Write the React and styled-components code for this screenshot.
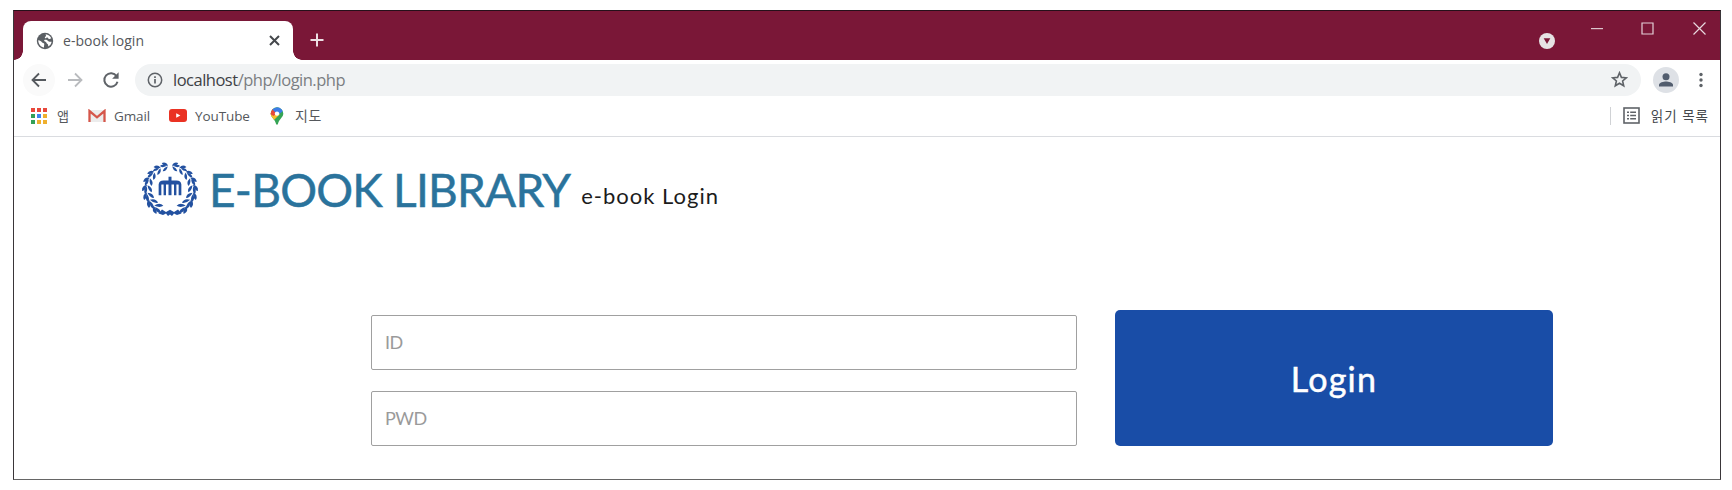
import React from "react";
import styled, { createGlobalStyle } from "styled-components";

const GlobalStyle = createGlobalStyle`
  * { box-sizing: border-box; }
  body { margin: 0; background: #fff; overflow: hidden; }
  svg { display: block; flex: none; }
`;

const uiFont = `"Open Sans", "Noto Sans CJK KR", sans-serif`;
const brandFont = `Lato, "Noto Sans CJK KR", sans-serif`;

const Page = styled.div`
  width: 1732px;
  height: 490px;
  padding: 10px 0 0 13px;
  background: #fff;
`;

const Window = styled.div`
  width: 1708px;
  height: 470px;
  border: 1px solid #3a3639;
  border-top-color: #26101a;
  border-bottom-color: #666;
  background: #fff;
  display: flex;
  flex-direction: column;
  font-family: ${uiFont};
`;

const TitleBar = styled.div`
  height: 49px;
  background: #7a1737;
  display: flex;
  align-items: flex-start;
  padding-left: 9px;
`;

const Tab = styled.div`
  position: relative;
  width: 270px;
  height: 39px;
  margin-top: 10px;
  padding: 0 13px 0 13px;
  border-radius: 8px 8px 0 0;
  background: #fff;
  display: flex;
  align-items: center;
  &::before, &::after {
    content: "";
    position: absolute;
    bottom: 0;
    width: 9px;
    height: 9px;
  }
  &::before { left: -9px; background: radial-gradient(circle at 0 0, transparent 8.5px, #fff 9px); }
  &::after { right: -9px; background: radial-gradient(circle at 100% 0, transparent 8.5px, #fff 9px); }
`;

const Label = styled.span`
  flex: none;
  white-space: pre;
  font-size: ${(p) => p.$size || 13.5}px;
  letter-spacing: ${(p) => p.$track || 0}px;
  color: ${(p) => p.$color || "#55585c"};
  line-height: 20px;
`;

const TabLabel = styled(Label)`
  flex: 1;
  margin-left: 9px;
`;

const NewTab = styled.div`
  margin: 22px 0 0 17px;
`;

const WindowControls = styled.div`
  margin-left: auto;
  display: flex;
  align-items: flex-start;
`;

const Control = styled.div`
  margin-top: ${(p) => p.$top}px;
  margin-right: ${(p) => p.$gap}px;
`;

const Toolbar = styled.div`
  height: 39px;
  padding: 0 17px 0 9px;
  display: flex;
  align-items: center;
`;

const NavButton = styled.div`
  width: 32px;
  height: 32px;
  margin-right: 4px;
  border-radius: 50%;
  background: ${(p) => (p.$raised ? "#fafafa" : "transparent")};
  display: flex;
  align-items: center;
  justify-content: center;
`;

const AddressBar = styled.div`
  flex: 1;
  height: 32px;
  margin-left: 4px;
  padding: 0 13px 0 12px;
  border-radius: 16px;
  background: #f1f3f4;
  display: flex;
  align-items: center;
`;

const Address = styled(Label)`
  flex: 1;
  margin-left: 10px;
  b { font-weight: 400; color: #3e4145; }
`;

const Avatar = styled.div`
  width: 26px;
  height: 26px;
  margin: 0 20px 0 12px;
  border-radius: 50%;
  background: #dee1e6;
  display: flex;
  align-items: center;
  justify-content: center;
`;

const Bookmarks = styled.div`
  height: 38px;
  padding: 0 11px 4px 17px;
  border-bottom: 1px solid #dadce0;
  display: flex;
  align-items: center;
`;

const Bookmark = styled.div`
  width: ${(p) => p.$width}px;
  display: flex;
  align-items: center;
  gap: ${(p) => p.$gap}px;
`;

const ReadingList = styled.div`
  height: 18px;
  margin-left: auto;
  padding-left: 12px;
  border-left: 1px solid #d0d2d5;
  display: flex;
  align-items: center;
  gap: 11px;
`;

const Header = styled.header`
  display: flex;
  align-items: flex-start;
  height: 80px;
  margin: 18px 0 0 127px;
  font-family: ${brandFont};
`;

const Crest = styled.div`
  margin-top: 7px;
`;

const Brand = styled.h1`
  margin: 0 0 0 10px;
  font-size: 46px;
  font-weight: 400;
  line-height: 70px;
  letter-spacing: -0.75px;
  color: #2a739c;
  -webkit-text-stroke: 0.5px #2a739c;
  white-space: nowrap;
`;

const Subtitle = styled.h2`
  margin: 6px 0 0 11px;
  font-size: 22px;
  font-weight: 400;
  line-height: 70px;
  letter-spacing: 1px;
  color: #1c1c1c;
  white-space: nowrap;
`;

const LoginForm = styled.form`
  display: grid;
  grid-template-columns: 706px 438px;
  column-gap: 38px;
  margin: 75px 0 0 357px;
  font-family: ${brandFont};
`;

const Fields = styled.div`
  display: flex;
  flex-direction: column;
  gap: 21px;
  padding-top: 5px;
`;

const Field = styled.input`
  width: 100%;
  height: 55px;
  padding: 0 13px 2px;
  border: 1px solid #a0a0a0;
  border-radius: 2px;
  outline: none;
  background: #fff;
  font: 400 18px ${brandFont};
  letter-spacing: -0.5px;
  &::placeholder { color: #9a9a9a; opacity: 1; }
`;

const Submit = styled.button`
  height: 136px;
  padding: 0;
  border: 0;
  border-radius: 5px;
  background: #194da7;
  color: #fff;
  font: 400 34px ${brandFont};
  letter-spacing: 1.3px;
  -webkit-text-stroke: 0.5px #fff;
`;

const GlobeIcon = () => (
  <svg width="18" height="18" viewBox="0 0 18 18">
    <circle cx="9" cy="9" r="8.2" fill="#5b5f64" />
    <path d="M9.6 2.2c2.600.2 4.700 1.700 5.700 4-.9.300-1.600 1.200-2.500.8-.8-.4-.4-1.300-1.500-1.500-1-.2-1 .9-2 .7-.8-.2-.4-1.300.3-1.600.8-.4.300-1.100 0-2.400z" fill="#fff" />
    <path d="M2.200 8.300c2 .2 3 .9 3.700 1.900.8 1 1.900.6 2.300 1.500.3.800-.3 1.500-.2 3.900-3-.5-5.600-3.100-5.800-7.300zM8.300 8c1.400-.6 2.900 0 3.800 1 .7.800 2.200.7 3.500.8-.2 1.800-1.300 3.700-3.300 4.800-.3-1.200.2-2.100-.8-2.700-1.200-.7-.7-1.600-1.700-2C9 9.500 7.700 9 8.300 8z" fill="#fff" />
  </svg>
);

const Arrow = ({ color, flip }) => (
  <svg width="16" height="16" viewBox="0 0 16 16" fill="none" stroke={color} strokeWidth="1.800">
    <path d={flip ? "M1 8h13M8 1.500 14.500 8 8 14.500" : "M15 8H2M8 1.500 1.500 8 8 14.500"} />
  </svg>
);

const ReloadIcon = () => (
  <svg width="18" height="18" viewBox="0 0 18 18">
    <path d="M14.600 5.200A6.700 6.700 0 1 0 15.500 10.700" fill="none" stroke="#5f6368" strokeWidth="2" />
    <path d="M16.600 1.300v6.500h-6.500z" fill="#5f6368" />
  </svg>
);

const InfoIcon = () => (
  <svg width="16" height="16" viewBox="0 0 16 16" fill="none" stroke="#5f6368">
    <circle cx="8" cy="8" r="6.700" strokeWidth="1.500" />
    <path d="M8 7v4.500M8 4.200v1.700" strokeWidth="1.700" />
  </svg>
);

const StarIcon = () => (
  <svg width="17" height="17" viewBox="0 0 17 17" fill="none" stroke="#5f6368" strokeWidth="1.600">
    <path d="m8.500 1.800 1.900 4.600 4.900.4-3.700 3.200 1.100 4.800-4.200-2.600-4.200 2.600 1.100-4.800-3.700-3.200 4.900-.4z" />
  </svg>
);

const PersonIcon = () => (
  <svg width="16" height="16" viewBox="0 0 16 16" fill="#525d6e">
    <circle cx="8" cy="4.700" r="3.500" />
    <path d="M1 14.500v-1.700c0-2.300 4.700-3.400 7-3.400s7 1.100 7 3.400v1.700z" />
  </svg>
);

const DotsIcon = () => (
  <svg width="4" height="16" viewBox="0 0 4 16" fill="#5f6368">
    {[2.500, 8, 13.500].map((y) => <circle key={y} cx="2" cy={y} r="1.700" />)}
  </svg>
);

const APP_COLORS = ["#e8483b", "#e8483b", "#e8483b", "#33a057", "#3d85f0", "#efb02e", "#33a057", "#efb02e", "#efb02e"];
const AppsIcon = () => (
  <svg width="16" height="16" viewBox="0 0 16 16">
    {APP_COLORS.map((c, i) => (
      <rect key={i} x={(i % 3) * 6} y={Math.floor(i / 3) * 6} width="4" height="4" fill={c} />
    ))}
  </svg>
);

const GmailIcon = () => (
  <svg width="18" height="14" viewBox="0 0 18 14">
    <rect x="1" y="1" width="16" height="12" fill="#ececec" />
    <path d="M1.500 13V2L9 8.300 16.500 2v11" fill="none" stroke="#d5564a" strokeWidth="2.300" />
  </svg>
);

const YouTubeIcon = () => (
  <svg width="18" height="13" viewBox="0 0 18 13">
    <rect width="18" height="13" rx="3" fill="#ea3223" />
    <path d="M7.200 4.200v4.600l4.200-2.300z" fill="#fff" />
  </svg>
);

const MapPinIcon = () => (
  <svg width="14" height="18" viewBox="0 0 14 18">
    <clipPath id="pin"><path d="M7 .3a6.300 6.300 0 0 1 6.300 6.300c0 4-4.500 5.700-5.500 11h-1.600C5.200 12.300.7 10.600.7 6.600A6.300 6.300 0 0 1 7 .3z" /></clipPath>
    <g clipPath="url(#pin)">
      <path d="M0 0h14v18H0z" fill="#35a455" />
      <path d="M0 5 5 5 10 7 3 14 0 11z" fill="#f7bd2b" />
      <path d="M0 2 3 2 7 6 3.500 9 0 7z" fill="#e6493a" />
      <path d="M2 2 7 0h7v3.500L9 7 6 6z" fill="#3c7de6" />
    </g>
    <circle cx="7" cy="6.600" r="2.200" fill="#fff" />
  </svg>
);

const ListIcon = () => (
  <svg width="17" height="17" viewBox="0 0 17 17" fill="none" stroke="#5f6368" strokeWidth="1.600">
    <rect x="1" y="1" width="15" height="15" />
    <path d="M4 5.200h2M7.200 5.200H13M4 8.500h2M7.200 8.500H13M4 11.800h2M7.200 11.800H13" />
  </svg>
);

const LEAF_ANGLES = [14, 33, 52, 71, 90, 109, 128, 147];
const CrestIcon = () => (
  <svg width="58" height="54" viewBox="-29 -27 58 54" fill="#2351a0">
    {[1, -1].map((side) => (
      <g key={side} transform={`scale(${side} 1)`}>
        {LEAF_ANGLES.map((a, i) => (
          <g key={a} transform={`rotate(${a}) translate(0 -22.800) scale(${0.85 + i * 0.035})`}>
            <path d="M-4.300-.2Q-3.500-5.800 2-5.200Q1.500-1.500-4.300-.2z" />
            <path d="M-2.500-.4Q1-4.500 5-2.200Q3 .9-2.500-.4z" />
            <path d="M-3.800.3Q1.500 1 3.300 4.600Q-1.500 6-3.800.3z" />
          </g>
        ))}
        <path d="M0 20.800 4 23 8 20.500l3.500 4L7 26l-3-1.500L2 27l-2-1.500z" />
      </g>
    ))}
    <g fill="none" stroke="#2351a0">
      <path d="M-10 6.200V-4.500Q-9.800-7.200-6.500-7.200H6.500Q9.800-7.200 10 -4.500V6.200" strokeWidth="2.700" />
      <path d="M-5.200-7V6.200M5.200-7V6.200" strokeWidth="2.400" />
      <path d="M0-12.300V6.200" strokeWidth="3" />
      <path d="M-9-5.600H9" strokeWidth="2.200" />
    </g>
  </svg>
);

export default function App() {
  return (
    <Page>
      <GlobalStyle />
      <Window>
        <TitleBar>
          <Tab>
            <GlobeIcon />
            <TabLabel $size={14} $track={0.05}>e-book login</TabLabel>
            <svg width="11" height="11" viewBox="0 0 11 11" stroke="#45484c" strokeWidth="2">
              <path d="m1 1 9 9M10 1 1 10" />
            </svg>
          </Tab>
          <NewTab>
            <svg width="14" height="14" viewBox="0 0 14 14" stroke="#ecdfe4" strokeWidth="2">
              <path d="M7 .5v13M.5 7h13" />
            </svg>
          </NewTab>
          <WindowControls>
            <Control $top={22} $gap={36}>
              <svg width="16" height="16" viewBox="0 0 16 16">
                <circle cx="8" cy="8" r="8" fill="#e6e3e4" />
                <path d="M4.700 5.300h6.600L8 11z" fill="#7a1737" />
              </svg>
            </Control>
            <Control $top={17} $gap={38}>
              <svg width="12" height="2" viewBox="0 0 12 2"><path d="M0 .6h12" stroke="#dcc5cd" strokeWidth="1.200" /></svg>
            </Control>
            <Control $top={11} $gap={39}>
              <svg width="13" height="13" viewBox="0 0 13 13"><path d="M1 1h11v11H1z" fill="none" stroke="#e3d0d7" strokeWidth="1.200" /></svg>
            </Control>
            <Control $top={11} $gap={14}>
              <svg width="13" height="13" viewBox="0 0 13 13"><path d="m.5.5 12 12M12.500.5l-12 12" stroke="#e8d8de" strokeWidth="1.200" /></svg>
            </Control>
          </WindowControls>
        </TitleBar>
        <Toolbar>
          <NavButton $raised><Arrow color="#55595e" /></NavButton>
          <NavButton><Arrow flip color="#b9bbbe" /></NavButton>
          <NavButton><ReloadIcon /></NavButton>
          <AddressBar>
            <InfoIcon />
            <Address $size={16.5} $track={-0.5} $color="#7b7e82"><b>localhost</b>/php/login.php</Address>
            <StarIcon />
          </AddressBar>
          <Avatar><PersonIcon /></Avatar>
          <DotsIcon />
        </Toolbar>
        <Bookmarks>
          <Bookmark $width={57} $gap={10}><AppsIcon /><Label $size={13}>앱</Label></Bookmark>
          <Bookmark $width={81} $gap={8}><GmailIcon /><Label $track={-0.1}>Gmail</Label></Bookmark>
          <Bookmark $width={101} $gap={8}><YouTubeIcon /><Label $track={-0.1}>YouTube</Label></Bookmark>
          <Bookmark $width={60} $gap={11}><MapPinIcon /><Label $size={14} $track={0.6}>지도</Label></Bookmark>
          <ReadingList><ListIcon /><Label $size={13.5} $track={1} $color="#45484c">읽기 목록</Label></ReadingList>
        </Bookmarks>
        <Header>
          <Crest><CrestIcon /></Crest>
          <Brand>E-BOOK LIBRARY</Brand>
          <Subtitle>e-book Login</Subtitle>
        </Header>
        <LoginForm onSubmit={(e) => e.preventDefault()}>
          <Fields>
            <Field placeholder="ID" />
            <Field type="password" placeholder="PWD" />
          </Fields>
          <Submit>Login</Submit>
        </LoginForm>
      </Window>
    </Page>
  );
}
